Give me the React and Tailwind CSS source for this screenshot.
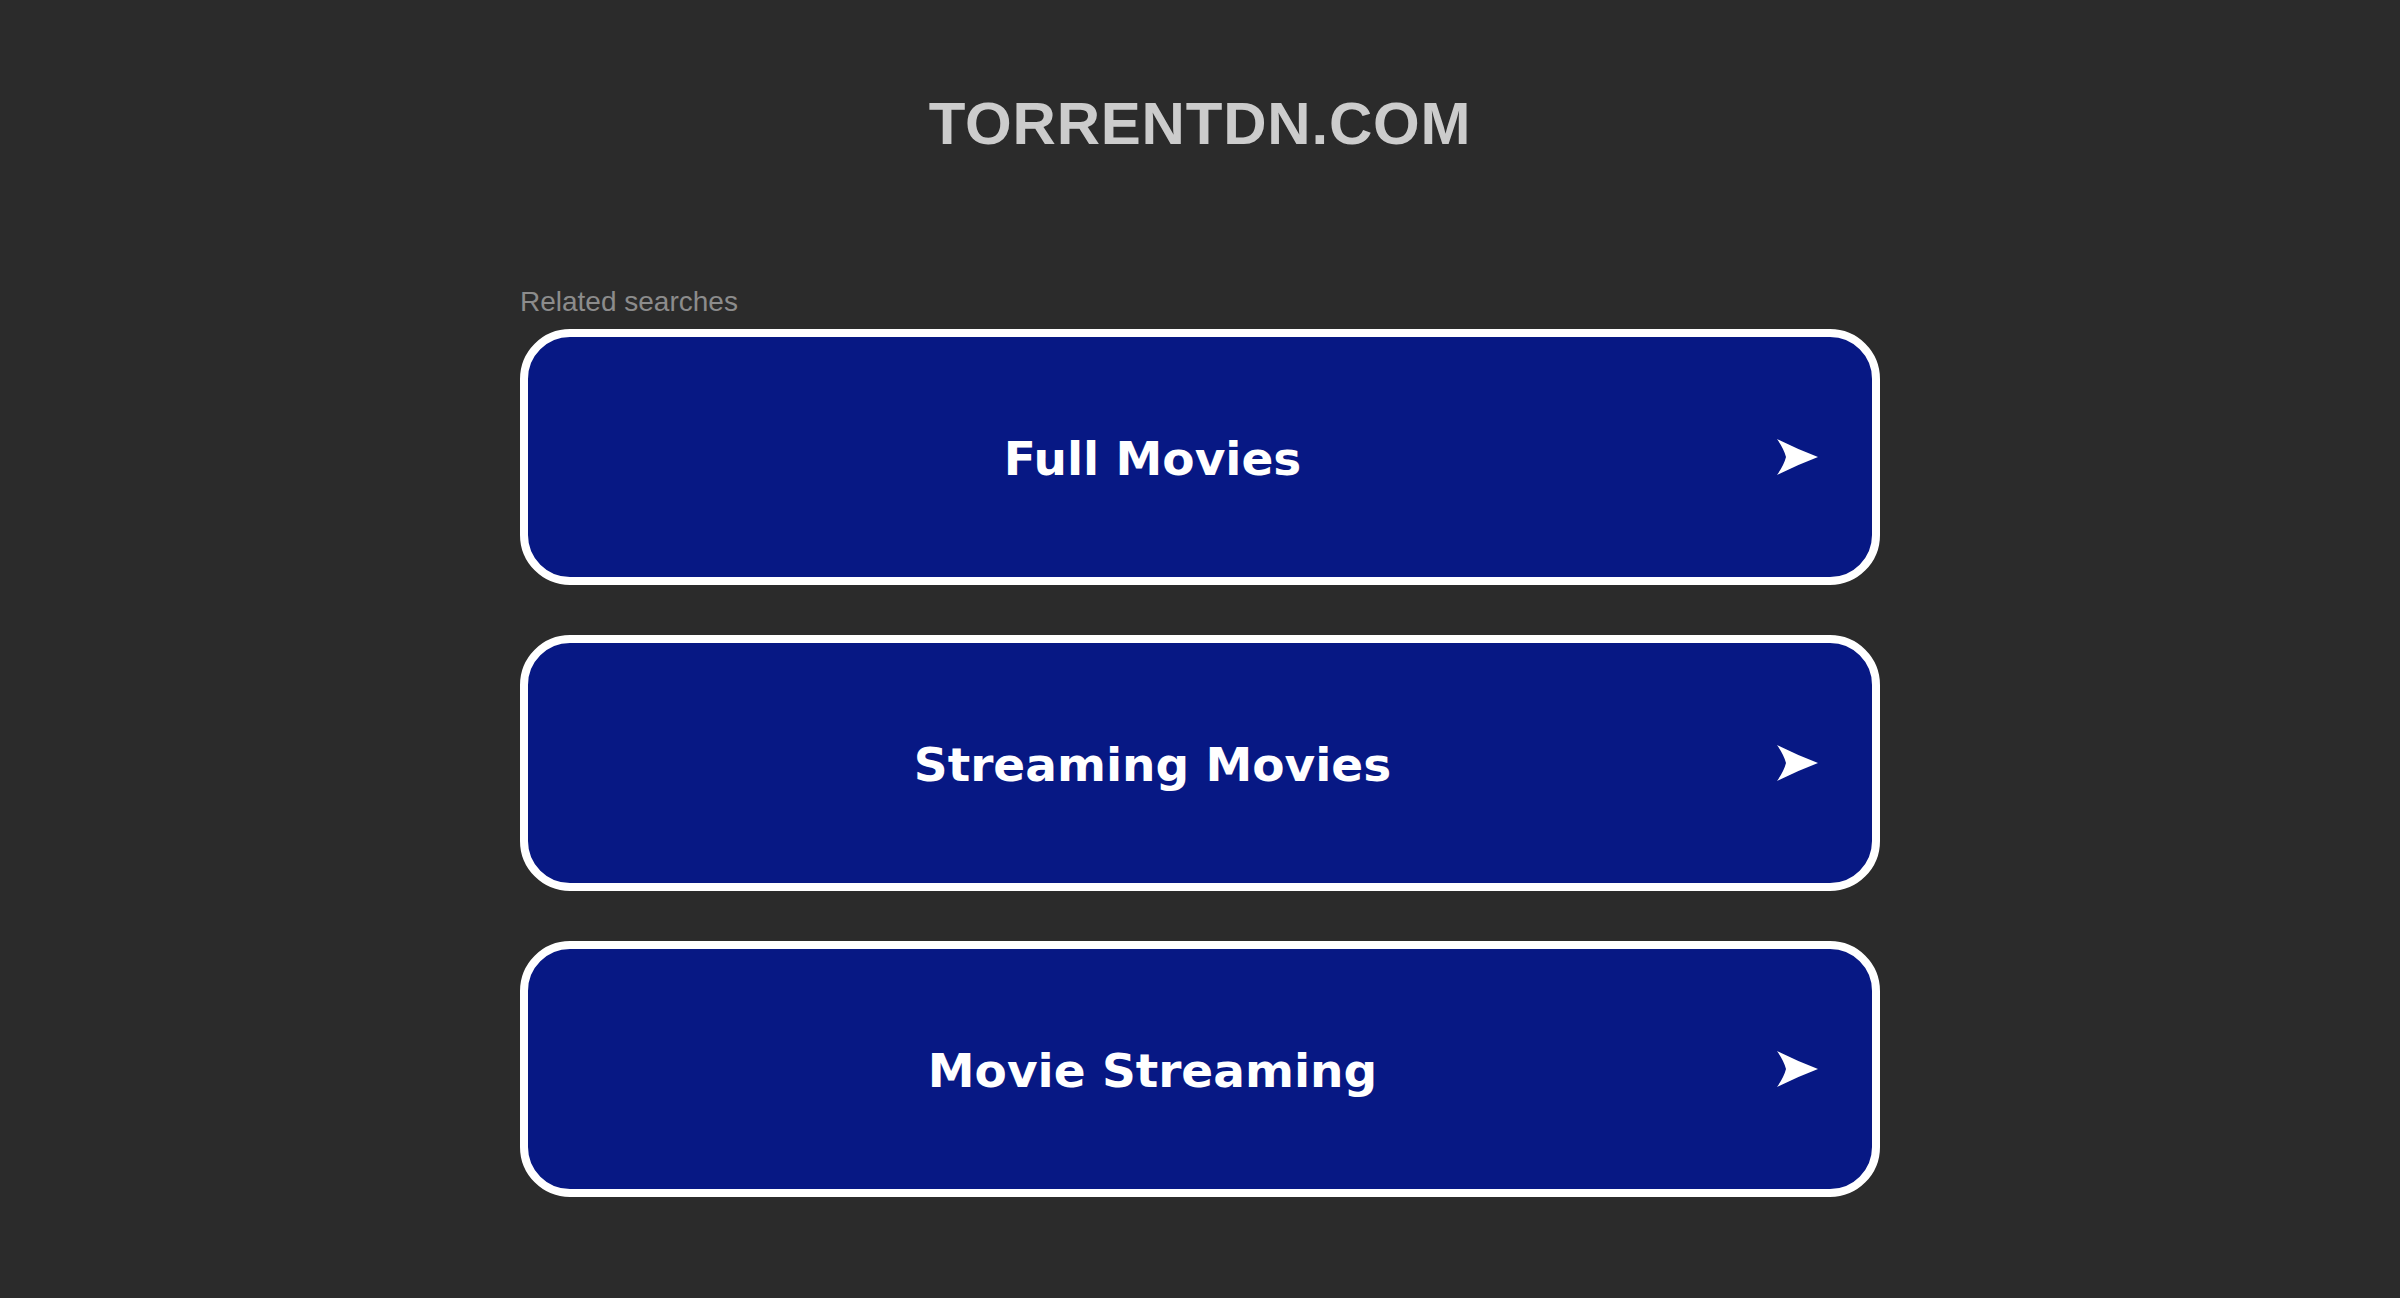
import React from 'react'

const searches = ['Full Movies', 'Streaming Movies', 'Movie Streaming']

function Arrow() {
  return (
    <svg width="41" height="36" viewBox="0 0 41 36" className="shrink-0">
      <path d="M0 0 Q20 10 41 18 Q20 26 0 36 Q7 26 9 18 Q7 10 0 0 Z" fill="#ffffff" />
    </svg>
  )
}

export default function App() {
  return (
    <div className="min-h-[1298px] w-full bg-[#2b2b2b] font-['Liberation_Sans',Arial,sans-serif]">
      <div className="pt-[94px] text-center">
        <h1 className="text-[60px] leading-none font-bold tracking-[0.8px] text-[#cccccc]">TORRENTDN.COM</h1>
      </div>

      <div className="mx-auto w-[1360px] pt-[134px]">
        <p className="text-[28px] leading-none text-[#8c8c8c]">Related searches</p>

        <div className="mt-[13px] flex flex-col gap-[50px]">
          {searches.map((s) => (
            <a
              key={s}
              href="#"
              className="flex h-[256px] items-center rounded-[50px] border-[8px] border-white bg-[#071884] pr-[54px]"
            >
              <span className="flex-1 pt-[3px] text-center text-[47px] leading-none font-bold text-white font-['DejaVu_Sans',Verdana,sans-serif]">
                {s}
              </span>
              <Arrow />
            </a>
          ))}
        </div>
      </div>
    </div>
  )
}
